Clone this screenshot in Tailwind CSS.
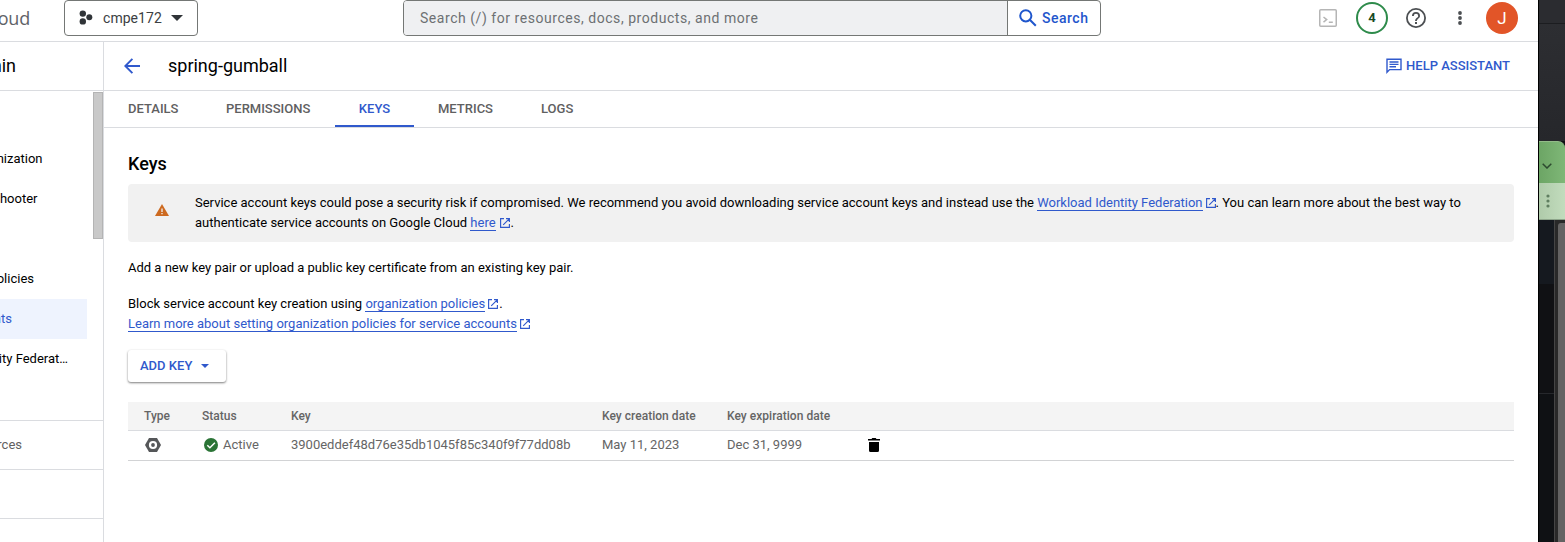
<!DOCTYPE html>
<html lang="en">
<head>
<meta charset="utf-8">
<title>spring-gumball – Keys</title>
<script src="https://cdn.jsdelivr.net/npm/@tailwindcss/browser@4"></script>
</head>
<body class="flex h-[542px] w-[1565px] overflow-hidden bg-white font-['Roboto',sans-serif] text-[13px] leading-5 text-black">
<svg class="hidden"><symbol id="ext" viewBox="0 0 10 10"><path d="M4 .6H.6v8.8h8.8V6M6 .6h3.4V4M9.2 .8L3.2 6.8" fill="none" stroke="#3059cc" stroke-width="1.15"/></symbol></svg>

<div class="flex w-[1538px] flex-col">
  <header class="flex h-[42px] shrink-0 items-start border-b border-[#dadce0]">
    <div class="flex h-9 w-[30px] items-center justify-end whitespace-nowrap font-['Open_Sans',sans-serif] text-[18px] tracking-[-.2px] text-[#5f6368]"><span>oud</span></div>
    <div class="ml-[34px] flex h-9 w-[134px] items-center rounded-[4px] border border-[#747775] pl-[14px]">
      <svg class="-mt-[2px] h-[15px] w-[14px] shrink-0" viewBox="0 0 14 15" fill="#303438"><circle cx="3.8" cy="3.6" r="3.2"/><circle cx="10.3" cy="7.3" r="3"/><circle cx="3.8" cy="11.4" r="3.2"/></svg>
      <span class="ml-[10px] w-[59px] text-[14px] tracking-[.05px] text-[#3c4043]">cmpe172</span>
      <svg class="ml-[9px] h-[6px] w-[12px]" viewBox="0 0 12 6" fill="#303438"><path d="M0 0h12L6 6z"/></svg>
    </div>
    <div class="ml-[205px] flex h-9 w-[698px] overflow-hidden rounded-[4px] border border-[#747775]">
      <div class="flex w-[604px] items-center border-r border-[#747775] bg-[#eff0f2] pl-4 text-[14px] tracking-[.54px] text-[#6d7073]">Search (/) for resources, docs, products, and more</div>
      <div class="flex items-center pl-[11px] text-[14px] font-medium tracking-[.5px] text-[#1f56cc]">
        <svg class="h-[18px] w-[18px]" viewBox="0 0 18 18" fill="none" stroke="#1f56cc" stroke-width="2"><circle cx="6.8" cy="6.8" r="5.6"/><path d="M10.8 10.8l6 6"/></svg>
        <span class="ml-[5px]">Search</span>
      </div>
    </div>
    <div class="ml-[218px] flex h-9 items-center">
      <svg class="h-[18px] w-[18px]" viewBox="0 0 18 18" fill="none" stroke="#b5b5b5" stroke-width="1.5"><rect x=".75" y=".75" width="16.5" height="16.5" rx="1"/><path d="M4.500 8l3.200 2.600-3.200 2.600M9.800 13.200h4"/></svg>
      <div class="ml-[19px] flex h-8 w-8 items-center justify-center rounded-full border-2 border-[#2e8b4b] text-[13px] font-bold text-[#174a24]">4</div>
      <svg class="ml-[18px] h-5 w-5" viewBox="0 0 20 20" fill="#4c4f52"><path d="M9 16h2v-2H9v2zm1-16a10 10 0 1 0 0 20 10 10 0 0 0 0-20zm0 18.200a8.200 8.200 0 1 1 0-16.400 8.200 8.200 0 0 1 0 16.400zM10 4a4 4 0 0 0-4 4h1.800a2.200 2.200 0 0 1 4.400 0c0 2-3.100 1.800-3.100 5h1.800c0-2.200 3.100-2.500 3.100-5a4 4 0 0 0-4-4z"/></svg>
      <svg class="ml-[32px] h-[14px] w-1" viewBox="0 0 4 14" fill="#4c4f52"><circle cx="2" cy="2" r="1.900"/><circle cx="2" cy="7" r="1.900"/><circle cx="2" cy="12" r="1.900"/></svg>
      <div class="ml-6 flex h-8 w-8 items-center justify-center rounded-full bg-[#e25528] text-[17px] text-white">J</div>
    </div>
  </header>

  <div class="flex grow">
    <aside class="flex w-[104px] shrink-0 flex-col border-r border-[#dadce0]">
      <div class="flex h-[49px] items-center border-b border-[#dadce0]"><div class="flex w-[16px] justify-end text-[18px]"><span>min</span></div></div>
      <div class="flex h-[330px] justify-between border-b border-[#dadce0]">
        <nav class="flex w-[87px] flex-col whitespace-nowrap pt-[48px]">
          <div class="flex h-10 items-center"><div class="flex w-[42.500px] justify-end"><span>nization</span></div></div>
          <div class="flex h-10 items-center"><div class="flex w-[37.500px] justify-end"><span>hooter</span></div></div>
          <div class="mt-10 flex h-10 items-center"><div class="flex w-[34px] justify-end"><span>olicies</span></div></div>
          <div class="flex h-10 items-center bg-[#eef3fe] text-[#3059cc]"><div class="flex w-[12px] justify-end"><span>nts</span></div></div>
          <div class="flex h-10 items-center"><div class="flex w-[68px] justify-end"><span>ity Federat…</span></div></div>
        </nav>
        <div class="mt-px h-[147px] w-[10px] border border-[#b4b4b4] bg-[#c9c9c9]"></div>
      </div>
      <div class="flex h-[49px] items-center border-b border-[#dadce0] text-[#5f6061]"><div class="flex w-[22px] justify-end"><span>rces</span></div></div>
      <div class="h-[49px] border-b border-[#dadce0]"></div>
    </aside>

    <main class="flex grow flex-col">
      <div class="flex h-[49px] items-center border-b border-[#dadce0] pl-5">
        <svg class="h-4 w-4" viewBox="0 0 16 16" fill="none" stroke="#3059cc" stroke-width="1.900"><path d="M16 8H1.500M8.400 .8L1.300 8l7.100 7.200"/></svg>
        <h1 class="ml-7 text-[18px]">spring-gumball</h1>
        <div class="ml-auto mr-7 flex items-center font-medium text-[#3059cc]">
          <svg class="h-4 w-4" viewBox="0 0 16 16" fill="none" stroke="#3059cc" stroke-width="1.400"><path d="M1 14.200V1.200h14v10.400H3.600z"/><path d="M3.500 4h9M3.500 6.400h9M3.500 8.800h6.500"/></svg>
          <span class="ml-1">HELP ASSISTANT</span>
        </div>
      </div>
      <div class="flex h-[37px] items-stretch border-b border-[#dadce0] font-medium leading-[35px] text-[#5f6061]">
        <div class="w-[98px] pl-6">DETAILS</div>
        <div class="w-[133px] pl-6">PERMISSIONS</div>
        <div class="h-[36px] w-[79px] border-b-2 border-[#3059cc] text-center text-[#3059cc]">KEYS</div>
        <div class="w-[103px] pl-6">METRICS</div>
        <div class="pl-6">LOGS</div>
      </div>
      <div class="flex flex-col items-start pl-6">
        <h2 class="mt-6 text-[18px] font-medium leading-6">Keys</h2>
        <div class="mt-2 flex h-[58px] w-[1386px] items-center rounded-[4px] bg-[#f1f1f1]">
          <svg class="ml-[27px] -mt-[6px] h-[12px] w-[14px]" viewBox="0 0 14 12"><path d="M7 0l7 12H0z" fill="#cd6a20"/><path d="M7 4.500v3.500M7 9v1.300" stroke="#f1f1f1" stroke-width="1.300"/></svg>
          <p class="ml-[26px] whitespace-nowrap">Service account keys could pose a security risk if compromised. We recommend you avoid downloading service account keys and instead use the <a class="border-b border-[#3059cc] text-[#3059cc]">Workload Identity Federation</a><svg class="ml-[3px] inline h-[10px] w-[10px] align-[-1px]"><use href="#ext"/></svg>. You can learn more about the best way to<br>authenticate service accounts on Google Cloud <a class="border-b border-[#3059cc] text-[#3059cc]">here</a><svg class="ml-1 mr-px inline h-[10px] w-[10px] align-[-1px]"><use href="#ext"/></svg>.</p>
        </div>
        <p class="mt-4">Add a new key pair or upload a public key certificate from an existing key pair.</p>
        <p class="mt-4">Block service account key creation using <a class="border-b border-[#3059cc] text-[#3059cc]">organization policies</a><svg class="ml-[3px] mr-px inline h-[10px] w-[10px] align-[-1px]"><use href="#ext"/></svg>.<br><a class="border-b border-[#3059cc] text-[#3059cc]">Learn more about setting organization policies for service accounts</a><svg class="ml-[3px] inline h-[10px] w-[10px] align-[-1px]"><use href="#ext"/></svg></p>
        <div class="mt-4 flex h-8 w-[98px] items-center rounded-[3px] bg-white pl-3 font-medium text-[#3059cc] shadow-[0_1px_2px_rgba(0,0,0,.4),0_1px_3px_rgba(0,0,0,.15)]">
          <span class="w-[53px]">ADD KEY</span>
          <svg class="ml-2 h-1 w-2" viewBox="0 0 8 4" fill="#3059cc"><path d="M0 0h8L4 4z"/></svg>
        </div>
        <div class="mt-5 flex h-[29px] w-[1386px] items-center border-b border-[#dadce0] bg-[#f4f4f4] pl-4 text-[12px] font-medium tracking-[.03px] text-[#656565]">
          <span class="w-[58px]">Type</span><span class="w-[89px]">Status</span><span class="w-[311px]">Key</span><span class="w-[125px]">Key creation date</span><span>Key expiration date</span>
        </div>
        <div class="flex h-[30px] w-[1386px] items-center border-b border-[#d2d3d5] pb-px pl-4 text-[#656565]">
          <div class="w-[60px] pl-[1px]"><svg class="h-[14px] w-4" viewBox="0 0 16 14"><path d="M4 0h8l4 7-4 7H4L0 7z" fill="#555759"/><circle cx="8" cy="7" r="4.100" fill="#fff"/><circle cx="8" cy="7" r="1.900" fill="#555759"/></svg></div>
          <div class="flex w-[87px] items-center"><svg class="h-[14px] w-[14px]" viewBox="0 0 14 14"><circle cx="7" cy="7" r="7" fill="#2b7436"/><path d="M3.300 7.200l2.600 2.500 5-5" fill="none" stroke="#fff" stroke-width="1.500"/></svg><span class="ml-[5px]">Active</span></div>
          <span class="w-[311px]">3900eddef48d76e35db1045f85c340f9f77dd08b</span>
          <span class="w-[125px]">May 11, 2023</span>
          <span class="w-[141px]">Dec 31, 9999</span>
          <svg class="h-[14px] w-3" viewBox="0 0 12 14" fill="#000"><path d="M0 1h3.500L4.300 0h3.400l.8 1H12v1.500H0zM1 4h10v8.500A1.500 1.500 0 0 1 9.500 14h-7A1.500 1.500 0 0 1 1 12.500z"/></svg>
        </div>
      </div>
    </main>
  </div>
</div>

<div class="flex w-[27px] flex-col border-l border-black bg-[#0f1114]">
  <div class="h-[24px] shrink-0 border-b border-[#1c1d20] bg-[#2b2c30]"></div>
  <div class="h-[117px] shrink-0 bg-[#2b2c30]">
    <div class="h-full bg-linear-to-b from-[#2d2e32] to-[#26272b]"></div>
  </div>
  <div class="flex h-[42px] shrink-0 items-center rounded-tr-[7px] border-t border-[#92bb88] bg-linear-to-r from-[#6ca565] to-[#7fb777] pl-[3px] pt-[6px]"><svg class="h-[6px] w-[10px]" viewBox="0 0 10 6"><path d="M.7 .7L5 5 9.300 .7" fill="none" stroke="#2c4a2f" stroke-width="1.500"/></svg></div>
  <div class="flex h-[37px] shrink-0 items-center border-b border-[#8da58a] bg-linear-to-r from-[#afcbaa] to-[#c2dcbd] pl-[7px]"><svg class="h-[14px] w-[4px]" viewBox="0 0 4 14" fill="#5f7e60"><circle cx="2" cy="2" r="1.600"/><circle cx="2" cy="7" r="1.600"/><circle cx="2" cy="12" r="1.600"/></svg></div>
  <div class="flex grow">
    <div class="w-[15px]"><div class="h-[64px] bg-[#15191f]"></div><div class="h-[110px] border-b border-[#26282c] bg-[#101114]"></div></div>
    <div class="grow border-l border-[#454545] bg-[#292929] pl-[3px] pt-[3px]"><div class="h-full rounded-tl-[3px] bg-[#646363]"></div></div>
  </div>
</div>
</body>
</html>
